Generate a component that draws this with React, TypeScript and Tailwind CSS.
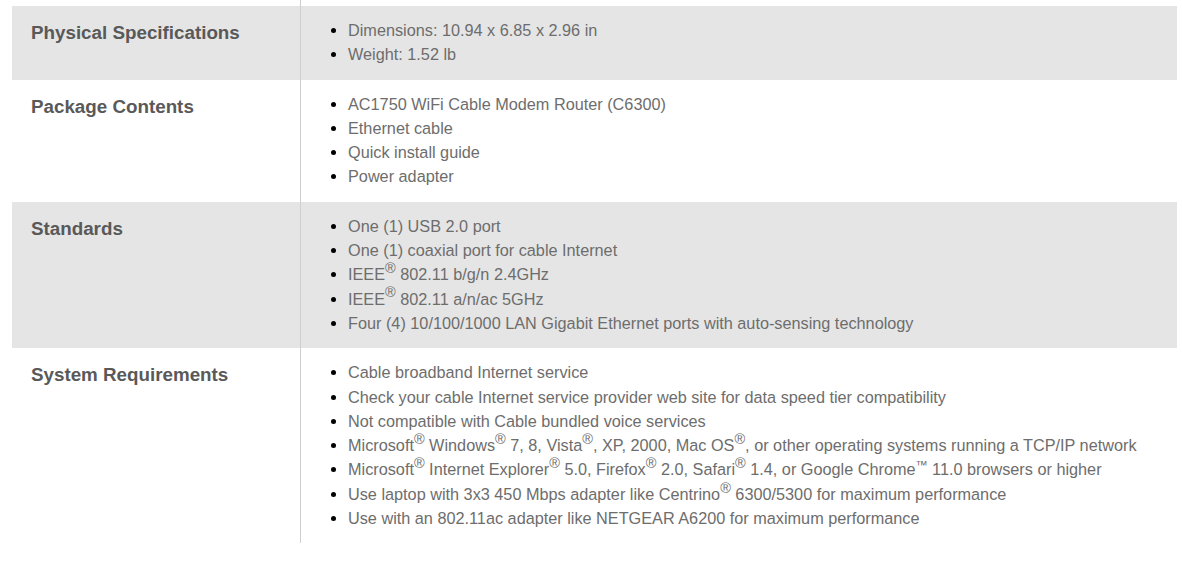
import React from 'react';

type Row = {
  title: string;
  items: React.ReactNode[];
  shaded: boolean;
};

const R = () => <sup className="text-[14.5px]">®</sup>;

const rows: Row[] = [
  {
    title: 'Physical Specifications',
    shaded: true,
    items: ['Dimensions: 10.94 x 6.85 x 2.96 in', 'Weight: 1.52 lb'],
  },
  {
    title: 'Package Contents',
    shaded: false,
    items: [
      'AC1750 WiFi Cable Modem Router (C6300)',
      'Ethernet cable',
      'Quick install guide',
      'Power adapter',
    ],
  },
  {
    title: 'Standards',
    shaded: true,
    items: [
      'One (1) USB 2.0 port',
      'One (1) coaxial port for cable Internet',
      <>IEEE<R /> 802.11 b/g/n 2.4GHz</>,
      <>IEEE<R /> 802.11 a/n/ac 5GHz</>,
      'Four (4) 10/100/1000 LAN Gigabit Ethernet ports with auto-sensing technology',
    ],
  },
  {
    title: 'System Requirements',
    shaded: false,
    items: [
      'Cable broadband Internet service',
      'Check your cable Internet service provider web site for data speed tier compatibility',
      'Not compatible with Cable bundled voice services',
      <>Microsoft<R /> Windows<R /> 7, 8, Vista<R />, XP, 2000, Mac OS<R />, or other operating systems running a TCP/IP network</>,
      <>Microsoft<R /> Internet Explorer<R /> 5.0, Firefox<R /> 2.0, Safari<R /> 1.4, or Google Chrome<sup className="text-[12px]">™</sup> 11.0 browsers or higher</>,
      <>Use laptop with 3x3 450 Mbps adapter like Centrino<R /> 6300/5300 for maximum performance</>,
      'Use with an 802.11ac adapter like NETGEAR A6200 for maximum performance',
    ],
  },
];

function SpecRow({ row }: { row: Row }) {
  return (
    <div className={`grid grid-cols-[288px_1fr] ${row.shaded ? 'bg-[#e5e5e5]' : 'bg-white'}`}>
      <div className="pl-[19px] pt-[15px] text-[18.8px] font-bold leading-[24px] text-[#595959]">
        {row.title}
      </div>
      <div className="border-l border-[#cfcfcf] pt-[12px] pb-[13px]">
        <ul className="list-disc pl-[47px] text-[16.25px] leading-[24.3px] text-[#6d6d6d] marker:text-black">
          {row.items.map((item, i) => (
            <li key={i}>{item}</li>
          ))}
        </ul>
      </div>
    </div>
  );
}

export default function App() {
  return (
    <div className="min-h-[561px] w-[1182px] bg-white font-['Liberation_Sans',Arial,sans-serif]">
      <div className="ml-[12px] w-[1165px]">
        <div className="grid h-[6px] grid-cols-[288px_1fr]">
          <div />
          <div className="border-l border-[#cfcfcf]" />
        </div>
        {rows.map((row) => (
          <SpecRow key={row.title} row={row} />
        ))}
      </div>
    </div>
  );
}
